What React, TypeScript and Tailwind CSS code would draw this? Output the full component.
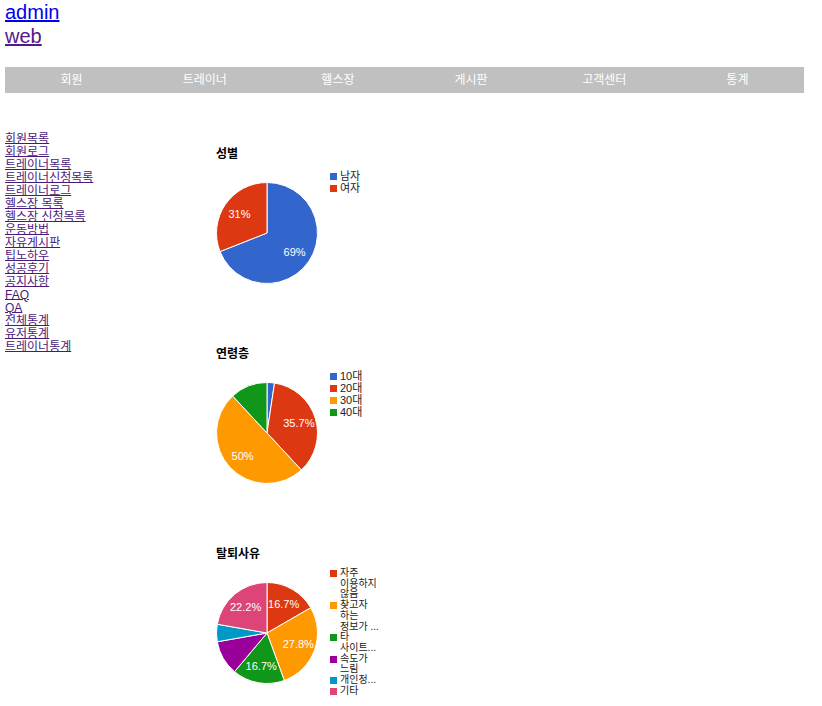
import React from "react";

type Slice = { value: number; color: string; label?: string };
type LegendItem = { color: string; lines: string[] };

const C = {
  blue: "#3366cc",
  red: "#dc3912",
  orange: "#ff9900",
  green: "#109618",
  purple: "#990099",
  cyan: "#0099c6",
  pink: "#dd4477",
};

const menu = ["회원", "트레이너", "헬스장", "게시판", "고객센터", "통계"];

const sideLinks = [
  "회원목록",
  "회원로그",
  "트레이너목록",
  "트레이너신청목록",
  "트레이너로그",
  "헬스장 목록",
  "헬스장 신청목록",
  "운동방법",
  "자유게시판",
  "팁노하우",
  "성공후기",
  "공지사항",
  "FAQ",
  "QA",
  "전체통계",
  "유저통계",
  "트레이너통계",
];

function Pie({ slices }: { slices: Slice[] }) {
  const total = slices.reduce((s, x) => s + x.value, 0);
  const cx = 51;
  const cy = 51;
  const r = 50.5;
  const pt = (a: number, rad: number) => [cx + rad * Math.sin(a), cy - rad * Math.cos(a)];
  let acc = 0;
  const parts = slices.map((s) => {
    const a0 = (acc / total) * Math.PI * 2;
    acc += s.value;
    const a1 = (acc / total) * Math.PI * 2;
    const [x0, y0] = pt(a0, r);
    const [x1, y1] = pt(a1, r);
    const large = a1 - a0 > Math.PI ? 1 : 0;
    const d = `M ${cx} ${cy} L ${x0} ${y0} A ${r} ${r} 0 ${large} 1 ${x1} ${y1} Z`;
    const [lx, ly] = pt((a0 + a1) / 2, r * 0.66);
    return { d, color: s.color, label: s.label, lx, ly };
  });
  return (
    <svg width="102" height="102" viewBox="0 0 102 102" className="shrink-0">
      {parts.map((p, i) => (
        <path key={i} d={p.d} fill={p.color} stroke="#ffffff" strokeWidth="1" />
      ))}
      {parts.map((p, i) =>
        p.label ? (
          <text
            key={"t" + i}
            x={p.lx}
            y={p.ly}
            fill="#ffffff"
            fontSize="11"
            fontFamily="'Liberation Sans', Arial, sans-serif"
            textAnchor="middle"
            dominantBaseline="central"
          >
            {p.label}
          </text>
        ) : null
      )}
    </svg>
  );
}

function Legend({ items, tight }: { items: LegendItem[]; tight?: boolean }) {
  return (
    <div
      className={`ml-[12px] flex flex-col text-[#222222] ${
        tight ? "mt-[7px] text-[10px] leading-[10.7px]" : "mt-[9px] text-[11px] leading-[12px]"
      }`}
    >
      {items.map((it, i) => (
        <div key={i} className="flex items-start">
          <span
            className={`mr-[3px] h-[7px] w-[7px] shrink-0 ${tight ? "mt-[2px]" : "mt-[2.5px]"}`}
            style={{ backgroundColor: it.color }}
          />
          <div className="flex flex-col">
            {it.lines.map((l, j) => (
              <span key={j} className="whitespace-nowrap">
                {l}
              </span>
            ))}
          </div>
        </div>
      ))}
    </div>
  );
}

function Chart({
  title,
  slices,
  legend,
  tight,
}: {
  title: string;
  slices: Slice[];
  legend: LegendItem[];
  tight?: boolean;
}) {
  return (
    <div className="h-[200px] w-[400px] pl-[6px] pt-[15px]">
      <div className="text-[12px] font-bold leading-[13px] text-black">{title}</div>
      <div className="flex items-start">
        <div className="mt-[21px]">
          <Pie slices={slices} />
        </div>
        <Legend items={legend} tight={tight} />
      </div>
    </div>
  );
}

export default function App() {
  return (
    <div className="min-h-screen bg-white p-[5px] pt-0 font-['Liberation_Sans','Noto_Sans_CJK_KR',sans-serif]">
      <div className="flex flex-col text-[20px] leading-[24px]">
        <a href="#" className="w-fit text-[#0000ee] underline">
          admin
        </a>
        <a href="#" className="w-fit text-[#551a8b] underline">
          web
        </a>
      </div>

      <nav className="mt-[19px] grid h-[26px] w-[799px] grid-cols-6 bg-[#c0c0c0]">
        {menu.map((m) => (
          <div key={m} className="flex items-center justify-center text-[12px] text-white">
            {m}
          </div>
        ))}
      </nav>

      <div className="mt-[40px] flex">
        <div className="flex w-[205px] flex-col text-[12px] leading-[13px]">
          {sideLinks.map((l) => (
            <a key={l} href="#" className="w-fit text-[#4a1a7b] underline underline-offset-[0px]">
              {l}
            </a>
          ))}
        </div>

        <div className="flex flex-col">
          <Chart
            title="성별"
            slices={[
              { value: 69, color: C.blue, label: "69%" },
              { value: 31, color: C.red, label: "31%" },
            ]}
            legend={[
              { color: C.blue, lines: ["남자"] },
              { color: C.red, lines: ["여자"] },
            ]}
          />
          <Chart
            title="연령층"
            slices={[
              { value: 1, color: C.blue },
              { value: 15, color: C.red, label: "35.7%" },
              { value: 21, color: C.orange, label: "50%" },
              { value: 5, color: C.green },
            ]}
            legend={[
              { color: C.blue, lines: ["10대"] },
              { color: C.red, lines: ["20대"] },
              { color: C.orange, lines: ["30대"] },
              { color: C.green, lines: ["40대"] },
            ]}
          />
          <Chart
            title="탈퇴사유"
            tight
            slices={[
              { value: 3, color: C.red, label: "16.7%" },
              { value: 5, color: C.orange, label: "27.8%" },
              { value: 3, color: C.green, label: "16.7%" },
              { value: 2, color: C.purple },
              { value: 1, color: C.cyan },
              { value: 4, color: C.pink, label: "22.2%" },
            ]}
            legend={[
              { color: C.red, lines: ["자주", "이용하지", "않음"] },
              { color: C.orange, lines: ["찾고자", "하는", "정보가 ..."] },
              { color: C.green, lines: ["타", "사이트..."] },
              { color: C.purple, lines: ["속도가", "느림"] },
              { color: C.cyan, lines: ["개인정..."] },
              { color: C.pink, lines: ["기타"] },
            ]}
          />
        </div>
      </div>
    </div>
  );
}
